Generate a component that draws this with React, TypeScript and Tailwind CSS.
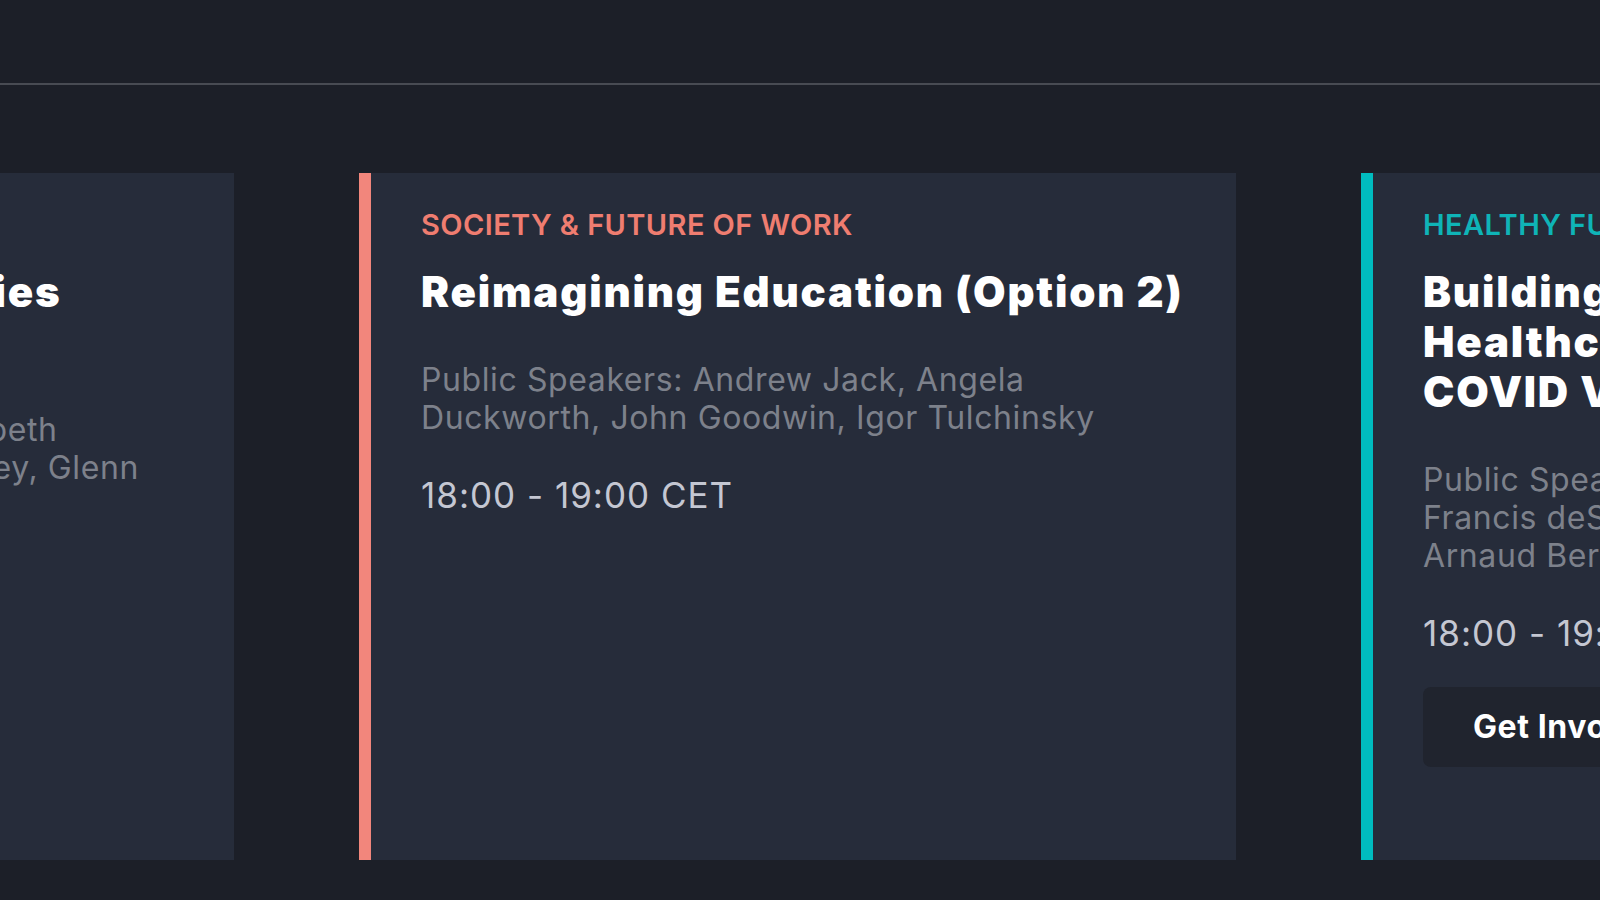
import React from "react";

type Session = {
  id: string;
  category: string;
  accent: "coral" | "teal";
  title: string;
  speakers: string;
  time: string;
  cta?: string;
};

const sessions: Session[] = [
  {
    id: "ageing",
    category: "HEALTHY FUTURES",
    accent: "teal",
    title: "Caring for Greying Societies\nin a Post-Pandemic World",
    speakers:
      "Public Speakers: Andrew Jack, Elizabeth\nBlackburn, Nir Barzilai, Aubrey de Grey, Glenn\nGerhard",
    time: "17:00 - 18:00 CET",
  },
  {
    id: "education",
    category: "SOCIETY & FUTURE OF WORK",
    accent: "coral",
    title: "Reimagining Education (Option 2)",
    speakers:
      "Public Speakers: Andrew Jack, Angela\nDuckworth, John Goodwin, Igor Tulchinsky",
    time: "18:00 - 19:00 CET",
  },
  {
    id: "healthcare",
    category: "HEALTHY FUTURES",
    accent: "teal",
    title: "Building Resilient Global\nHealthcare Systems after\nCOVID Vaccination",
    speakers:
      "Public Speakers: Andrew Jack, Seth Berkley,\nFrancis deSouza, Soumya Swaminathan,\nArnaud Bernaert",
    time: "18:00 - 19:00 CET",
    cta: "Get Involved",
  },
];

function SessionCard({ session }: { session: Session }) {
  const coral = session.accent === "coral";
  return (
    <div
      className={`w-[877px] h-[687px] shrink-0 bg-[#262c3a] border-l-[12px] pl-[50px] pr-[40px] pt-[34px] ${
        coral ? "border-[#f2867c]" : "border-[#00bcbf]"
      }`}
    >
      <div
        className={`text-[29px] leading-[36px] font-semibold tracking-[0.4px] whitespace-nowrap ${
          coral ? "text-[#ef7d70]" : "text-[#0fb4b7]"
        }`}
      >
        {session.category}
      </div>
      <h2 className="mt-[24px] text-[42px] leading-[50px] font-black tracking-[1.8px] text-white whitespace-pre-line">
        {session.title}
      </h2>
      <p className="mt-[44px] text-[32px] leading-[38px] tracking-[0.6px] text-[#7d818b] whitespace-pre-line">
        {session.speakers}
      </p>
      <div className="mt-[37px] text-[35px] leading-[42px] tracking-[1px] text-[#c4c7d2] whitespace-nowrap">
        {session.time}
      </div>
      {session.cta && (
        <button className="mt-[33px] h-[80px] px-[50px] rounded-lg bg-[#20242e] text-[32px] leading-[38px] font-bold tracking-[0.6px] text-white whitespace-nowrap">
          {session.cta}
        </button>
      )}
    </div>
  );
}

export default function App() {
  return (
    <div
      className="w-[1600px] h-[900px] overflow-hidden bg-[#1c1f28]"
      style={{ fontFamily: "Inter, 'Liberation Sans', sans-serif" }}
    >
      <div className="h-[83px]" />
      <div className="h-[2px] bg-[#484b53]" />
      <div className="pt-[88px]">
        <div className="flex gap-[125px] ml-[-643px]">
          {sessions.map((s) => (
            <SessionCard key={s.id} session={s} />
          ))}
        </div>
      </div>
    </div>
  );
}
